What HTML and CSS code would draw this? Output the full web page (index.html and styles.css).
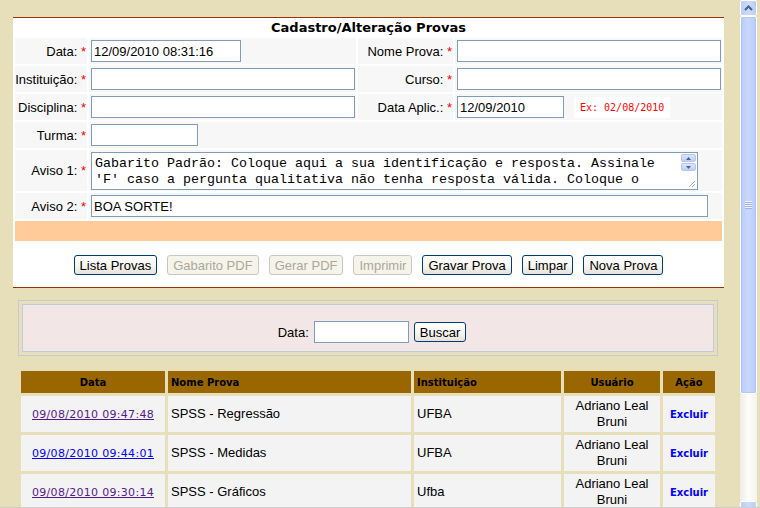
FILE: index.html
```html
<!DOCTYPE html>
<html lang="pt-BR">
<head>
<meta charset="utf-8">
<title>Cadastro/Alteração Provas</title>
<link rel="stylesheet" href="styles.css">
</head>
<body>
<div class="window">
  <div class="main">
    <div class="panel">
      <div class="title">Cadastro/Alteração Provas</div>
      <div class="form">
        <div class="lbl"><span>Data: <span class="req">*</span></span></div>
        <div class="fld"><input class="txt w150" type="text" value="12/09/2010 08:31:16"></div>
        <div class="lbl"><span>Nome Prova: <span class="req">*</span></span></div>
        <div class="fld"><input class="txt w264" type="text"></div>

        <div class="lbl"><span>Instituição: <span class="req">*</span></span></div>
        <div class="fld"><input class="txt w264" type="text"></div>
        <div class="lbl"><span>Curso: <span class="req">*</span></span></div>
        <div class="fld"><input class="txt w264" type="text"></div>

        <div class="lbl"><span>Disciplina: <span class="req">*</span></span></div>
        <div class="fld"><input class="txt w264" type="text"></div>
        <div class="lbl"><span>Data Aplic.: <span class="req">*</span></span></div>
        <div class="fld"><input class="txt w107" type="text" value="12/09/2010"><span class="hint">Ex: 02/08/2010</span></div>

        <div class="lbl"><span>Turma: <span class="req">*</span></span></div>
        <div class="fld span3"><input class="txt w107" type="text"></div>

        <div class="lbl"><span>Aviso 1: <span class="req">*</span></span></div>
        <div class="fld span3 top">
          <div class="memo">
            <textarea class="memo-text">Gabarito Padrão: Coloque aqui a sua identificação e resposta. Assinale 'F' caso a pergunta qualitativa não tenha resposta válida. Coloque o gabarito oficial da prova.</textarea>
            <div class="memo-bar">
              <span class="mini-btn"><svg width="5" height="3" viewBox="0 0 5 3"><path d="M0 3 L2.5 0 L5 3 Z" fill="#4D6185"/></svg></span>
              <span class="mini-btn"><svg width="5" height="3" viewBox="0 0 5 3"><path d="M0 0 L2.5 3 L5 0 Z" fill="#4D6185"/></svg></span>
              <span class="grip-corner"><svg width="8" height="8" viewBox="0 0 8 8"><path d="M7 1 L1 7 M7 4 L4 7" stroke="#A0A0A0" stroke-width="1"/><path d="M8 2 L2 8 M8 5 L5 8" stroke="#FFFFFF" stroke-width="1"/></svg></span>
            </div>
          </div>
        </div>

        <div class="lbl"><span>Aviso 2: <span class="req">*</span></span></div>
        <div class="fld span3"><input class="txt w617" type="text" value="BOA SORTE!"></div>

        <div class="status span4"></div>
      </div>
      <div class="actions">
        <button class="btn" type="button">Lista Provas</button>
        <button class="btn" type="button" disabled>Gabarito PDF</button>
        <button class="btn" type="button" disabled>Gerar PDF</button>
        <button class="btn" type="button" disabled>Imprimir</button>
        <button class="btn" type="button">Gravar Prova</button>
        <button class="btn" type="button">Limpar</button>
        <button class="btn" type="button">Nova Prova</button>
      </div>
    </div>

    <div class="search">
      <div class="search-inner">
        <span>Data:</span>
        <input class="txt w95" type="text">
        <button class="btn" type="button">Buscar</button>
      </div>
    </div>

    <table class="results">
      <colgroup>
        <col class="c-data"><col class="c-nome"><col class="c-inst"><col class="c-user"><col class="c-acao">
      </colgroup>
      <thead>
        <tr><th class="ctr">Data</th><th>Nome Prova</th><th>Instituição</th><th class="ctr">Usuário</th><th class="ctr">Ação</th></tr>
      </thead>
      <tbody>
        <tr>
          <td class="ctr"><a class="lnk visited" href="#">09/08/2010 09:47:48</a></td>
          <td>SPSS - Regressão</td>
          <td>UFBA</td>
          <td class="ctr">Adriano Leal Bruni</td>
          <td class="ctr"><a class="del" href="#">Excluir</a></td>
        </tr>
        <tr>
          <td class="ctr"><a class="lnk" href="#">09/08/2010 09:44:01</a></td>
          <td>SPSS - Medidas</td>
          <td>UFBA</td>
          <td class="ctr">Adriano Leal Bruni</td>
          <td class="ctr"><a class="del" href="#">Excluir</a></td>
        </tr>
        <tr>
          <td class="ctr"><a class="lnk visited" href="#">09/08/2010 09:30:14</a></td>
          <td>SPSS - Gráficos</td>
          <td>Ufba</td>
          <td class="ctr">Adriano Leal Bruni</td>
          <td class="ctr"><a class="del" href="#">Excluir</a></td>
        </tr>
      </tbody>
    </table>
  </div>

  <div class="vscroll">
    <div class="sb-btn"><svg width="9" height="6" viewBox="0 0 9 6"><path d="M1 5 L4.5 1.5 L8 5" fill="none" stroke="#4D6185" stroke-width="2"/></svg></div>
    <div class="sb-thumb"><span class="sb-grip"></span></div>
    <div class="sb-track"></div>
    <div class="sb-btn"></div>
  </div>
</div>
</body>
</html>
```

FILE: styles.css
```css
* { box-sizing: border-box; }

html, body {
  margin: 0;
  padding: 0;
}

body {
  background: #E7DFB9;
  font-family: "Liberation Sans", Arial, sans-serif;
  font-size: 13px;
  color: #000;
}

.window {
  display: flex;
  height: 508px;
  overflow: hidden;
  border-bottom: 1px solid #CFCFCF;
}

.main {
  flex: 1;
  min-width: 0;
  overflow: hidden;
}

/* ---------- form panel ---------- */
.panel {
  width: 711px;
  margin: 17px 0 0 13px;
  background: #FFFFFF;
  border-top: 1px solid #993300;
  border-bottom: 1px solid #993300;
}

.title {
  height: 20px;
  line-height: 20px;
  text-align: center;
  font-family: "DejaVu Sans", Verdana, sans-serif;
  font-weight: bold;
  font-size: 13px;
}

.form {
  display: grid;
  grid-template-columns: 72px 267px 95px 267px;
  grid-template-rows: 26px 26px 26px 26px 41px 26px 20px;
  gap: 2px;
  padding: 0 2px;
}

.lbl {
  background: #F7F7F7;
  display: flex;
  align-items: center;
  justify-content: flex-end;
  padding-right: 1px;
  white-space: nowrap;
}

.req { color: #FF0000; }

.fld {
  background: #F7F7F7;
  display: flex;
  align-items: center;
  padding-left: 2px;
}

.fld.top {
  align-items: flex-start;
  padding-top: 2px;
}

.span3 { grid-column: span 3; }
.span4 { grid-column: span 4; }

.status { background: #FFCC99; }

.txt {
  height: 22px;
  border: 1px solid #7F9DB9;
  padding: 1px 2px;
  font-family: "Liberation Sans", Arial, sans-serif;
  font-size: 13px;
  color: #000;
  background: #FFF;
  outline: none;
}

.w95 { width: 95px; }
.w107 { width: 107px; }
.w150 { width: 150px; }
.w264 { width: 264px; }
.w617 { width: 617px; }

.hint {
  margin-left: 10px;
  background: #FFFFFF;
  color: #FF0000;
  font-family: "DejaVu Sans Mono", "Liberation Mono", monospace;
  font-size: 10px;
  height: 21px;
  line-height: 21px;
  padding: 0 6px;
}

/* memo (textarea) */
.memo {
  display: flex;
  width: 607px;
  height: 38px;
  border: 1px solid #7F9DB9;
  background: #FFF;
}

.memo-text {
  flex: 1;
  border: 0;
  margin: 0;
  padding: 3px 3px 0;
  resize: none;
  overflow: hidden;
  font-family: "Liberation Mono", "Courier New", monospace;
  font-size: 13.33px;
  line-height: 16px;
  color: #000;
  background: #FFF;
  outline: none;
}

.memo-bar {
  width: 17px;
  display: flex;
  flex-direction: column;
  align-items: center;
  padding-top: 1px;
  gap: 1px;
}

.mini-btn {
  width: 15px;
  height: 8px;
  display: flex;
  align-items: center;
  justify-content: center;
  border: 1px solid #B4C6F0;
  border-radius: 2px;
  background: linear-gradient(#DCE6FE, #BCCFFA);
}

.grip-corner {
  margin-top: auto;
  align-self: flex-end;
  width: 9px;
  height: 9px;
  display: flex;
}

/* ---------- buttons ---------- */
.actions {
  display: flex;
  justify-content: center;
  gap: 10px;
  padding: 14px 0 12px;
}

.btn {
  height: 20px;
  padding: 0 5px;
  border: 1px solid #003C74;
  border-radius: 3px;
  background: linear-gradient(#FFFFFF 0%, #F6F5F0 55%, #E4E2D9 100%);
  font-family: "Liberation Sans", Arial, sans-serif;
  font-size: 13px;
  color: #000;
  line-height: 17px;
}

.btn:disabled {
  color: #ACA899;
  border-color: #CAC8BB;
  background: #F5F4EA;
}

/* ---------- search ---------- */
.search {
  width: 700px;
  margin: 12px 0 0 18px;
  border: 1px solid #C4CBD2;
  padding: 3px;
}

.search-inner {
  border: 1px solid #C4CBD2;
  background: #F2E6E6;
  display: flex;
  align-items: center;
  justify-content: center;
  gap: 5px;
  padding: 16px 0 8px 8px;
}

/* ---------- results ---------- */
.results {
  width: 700px;
  margin: 12px 0 0 18px;
  border-spacing: 3px;
  table-layout: fixed;
}

.c-data { width: 144px; }
.c-nome { width: 243px; }
.c-inst { width: 147px; }
.c-user { width: 96px; }
.c-acao { width: 52px; }

.results th {
  background: #996600;
  height: 22px;
  padding: 0 3px;
  text-align: left;
  font-family: "DejaVu Sans", Verdana, sans-serif;
  font-size: 10px;
  font-weight: bold;
  color: #000;
}

.results td {
  background: #F3F3F3;
  height: 36px;
  padding: 0 3px;
  line-height: 16px;
  font-size: 13px;
}

.results .ctr { text-align: center; }

.lnk {
  font-family: "DejaVu Sans", Verdana, sans-serif;
  font-size: 11px;
  letter-spacing: 0.3px;
  color: #0000FF;
  text-decoration: underline;
}

.lnk.visited { color: #551A8B; }

.del {
  font-family: "DejaVu Sans", Verdana, sans-serif;
  font-size: 10px;
  font-weight: bold;
  color: #0000FF;
  text-decoration: none;
}

/* ---------- page scrollbar ---------- */
.vscroll {
  width: 17px;
  margin-right: 3px;
  display: flex;
  flex-direction: column;
  overflow: hidden;
}

.sb-btn {
  flex: 0 0 16px;
  height: 16px;
  border: 1px solid #FFFFFF;
  border-radius: 2px;
  background: linear-gradient(to right, #B9CDF9, #CCDBFE 50%, #B9CDF9);
  display: flex;
  align-items: center;
  justify-content: center;
}

.sb-thumb {
  flex: 0 0 378px;
  border: 1px solid #FFFFFF;
  border-radius: 2px;
  box-shadow: inset 0 0 0 1px #B5C8F5;
  background: linear-gradient(to right, #B6CAF8, #C8D8FE 45%, #C2D3FD 70%, #B6CAF8);
  display: flex;
  align-items: center;
  justify-content: center;
}

.sb-grip {
  width: 7px;
  height: 8px;
  background: repeating-linear-gradient(#EEF3FF 0 1px, #9DB3E6 1px 2px);
}

.sb-track {
  flex: 0 0 107px;
  background: linear-gradient(to right, #EEEDE5, #FDFDFA 50%, #F4F3EC);
}
```
